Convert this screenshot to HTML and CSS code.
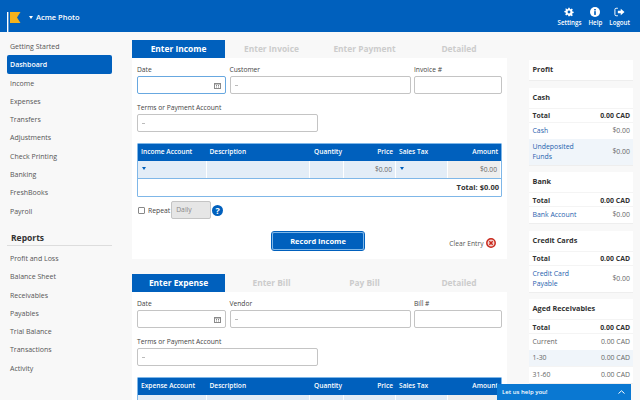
FILE: index.html
```html
<!DOCTYPE html>
<html lang="en">
<head>
	<meta charset="UTF-8">
	<title>Acme Photo</title>
	<link rel="stylesheet" href="styles.css">
</head>
<body>
	<header class="topbar">
		<div class="brand">
			<svg class="flag" width="14" height="20" viewBox="0 0 14 20"><rect x="0" y="0" width="1.4" height="20" fill="#fff"/><path d="M3 0H13.5L10 5.500L13.500 11H3Z" fill="#f5b21a"/></svg>
			<span class="caret caret-white"></span>
			<span class="company">Acme Photo</span>
		</div>
		<nav class="topnav">
			<div class="topnav-item">
				<svg width="10" height="10" viewBox="-1 -1 14 14"><path fill="#fff" fill-rule="evenodd" d="M5 0h2l.3 1.700 1.100.5L9.900 1.200l1.400 1.400-1 1.500.5 1.100 1.700.3v2l-1.700.3-.5 1.100 1 1.500-1.400 1.400-1.500-1-1.100.5L7 12H5l-.3-1.700-1.100-.5-1.500 1L.7 9.400l1-1.500-.5-1.100L-.5 6.500v-2l1.700-.3.5-1.100-1-1.500L2.100 1.200l1.500 1 1.100-.5zM6 4a2 2 0 1 0 0 4 2 2 0 0 0 0-4z"/></svg>
				<span>Settings</span>
			</div>
			<div class="topnav-item">
				<svg width="10" height="10" viewBox="0 0 12 12"><circle cx="6" cy="6" r="6" fill="#fff"/><rect x="5" y="5" width="2" height="4.500" fill="#0060bd"/><rect x="5" y="2.400" width="2" height="1.700" fill="#0060bd"/></svg>
				<span>Help</span>
			</div>
			<div class="topnav-item">
				<svg width="11" height="10" viewBox="0 0 13 12"><path fill="none" stroke="#fff" stroke-width="1.200" d="M4.500 1.500H2.500a1.500 1.500 0 0 0-1.500 1.500v6a1.500 1.500 0 0 0 1.500 1.500h2"/><path fill="#fff" d="M4.500 4.500H8V2l4.500 4L8 10V7.500H4.500z"/></svg>
				<span>Logout</span>
			</div>
		</nav>
	</header>

	<div class="layout">
		<aside class="sidebar">
			<a class="side-link">Getting Started</a>
			<a class="side-link active">Dashboard</a>
			<a class="side-link">Income</a>
			<a class="side-link">Expenses</a>
			<a class="side-link">Transfers</a>
			<a class="side-link">Adjustments</a>
			<a class="side-link">Check Printing</a>
			<a class="side-link">Banking</a>
			<a class="side-link">FreshBooks</a>
			<a class="side-link">Payroll</a>
			<div class="side-heading">Reports</div>
			<a class="side-link">Profit and Loss</a>
			<a class="side-link">Balance Sheet</a>
			<a class="side-link">Receivables</a>
			<a class="side-link">Payables</a>
			<a class="side-link">Trial Balance</a>
			<a class="side-link">Transactions</a>
			<a class="side-link">Activity</a>
		</aside>

		<main class="center">
			<section class="entry">
				<div class="tabs">
					<div class="tab current">Enter Income</div>
					<div class="tab">Enter Invoice</div>
					<div class="tab">Enter Payment</div>
					<div class="tab">Detailed</div>
				</div>
				<div class="panel">
					<div class="fields">
						<label class="field">Date
							<span class="input focused"><svg class="cal" width="7" height="7" viewBox="0 0 7 7"><path fill="#8a8a8a" d="M0 1h7v6H0zM1 2.500v3.500h5V2.500z"/><path fill="#8a8a8a" d="M2 3h1v1H2zM4 3h1v1H4zM2 4.600h1v1H2zM4 4.600h1v1H4z"/></svg></span>
						</label>
						<label class="field">Customer
							<span class="input"><i class="dash"></i></span>
						</label>
						<label class="field">Invoice #
							<span class="input"></span>
						</label>
					</div>
					<label class="field field-terms">Terms or Payment Account
						<span class="input"><i class="dash"></i></span>
					</label>
					<div class="lines">
						<div class="lines-head">
							<span>Income Account</span><span>Description</span><span class="qty">Quantity</span><span class="num">Price</span><span>Sales Tax</span><span class="num">Amount</span>
						</div>
						<div class="lines-row">
							<span><i class="caret"></i></span><span></span><span></span><span class="num">$0.00</span><span><i class="caret"></i></span><span class="num readonly">$0.00</span>
						</div>
						<div class="lines-total">Total: $0.00</div>
					</div>
					<div class="repeat">
						<span class="check"></span>
						<span>Repeat</span>
						<span class="daily">Daily</span>
						<span class="help-dot">?</span>
					</div>
					<div class="actions">
						<button class="record">Record Income</button>
						<span class="clear">Clear Entry
							<svg width="10" height="10" viewBox="0 0 10 10"><circle cx="5" cy="5" r="4.200" fill="#f4d6d2" stroke="#c9281c" stroke-width="1.500"/><path d="M3.300 3.300l3.400 3.400M6.700 3.300l-3.400 3.400" stroke="#c9281c" stroke-width="1.400"/></svg>
						</span>
					</div>
				</div>
			</section>

			<section class="entry">
				<div class="tabs">
					<div class="tab current">Enter Expense</div>
					<div class="tab">Enter Bill</div>
					<div class="tab">Pay Bill</div>
					<div class="tab">Detailed</div>
				</div>
				<div class="panel">
					<div class="fields">
						<label class="field">Date
							<span class="input"><svg class="cal" width="7" height="7" viewBox="0 0 7 7"><path fill="#8a8a8a" d="M0 1h7v6H0zM1 2.500v3.500h5V2.500z"/><path fill="#8a8a8a" d="M2 3h1v1H2zM4 3h1v1H4zM2 4.600h1v1H2zM4 4.600h1v1H4z"/></svg></span>
						</label>
						<label class="field">Vendor
							<span class="input"><i class="dash"></i></span>
						</label>
						<label class="field">Bill #
							<span class="input"></span>
						</label>
					</div>
					<label class="field field-terms">Terms or Payment Account
						<span class="input"><i class="dash"></i></span>
					</label>
					<div class="lines">
						<div class="lines-head">
							<span>Expense Account</span><span>Description</span><span class="qty">Quantity</span><span class="num">Price</span><span>Sales Tax</span><span class="num">Amount</span>
						</div>
						<div class="lines-row">
							<span></span><span></span><span></span><span></span><span></span><span class="readonly"></span>
						</div>
					</div>
				</div>
			</section>
		</main>

		<aside class="summary">
			<div class="card"><h3>Profit</h3></div>
			<div class="card">
				<h3>Cash</h3>
				<div class="row total"><span>Total</span><span>0.00 CAD</span></div>
				<div class="row"><a>Cash</a><span>$0.00</span></div>
				<div class="row tinted"><a>Undeposited Funds</a><span>$0.00</span></div>
			</div>
			<div class="card">
				<h3>Bank</h3>
				<div class="row total"><span>Total</span><span>0.00 CAD</span></div>
				<div class="row"><a>Bank Account</a><span>$0.00</span></div>
			</div>
			<div class="card">
				<h3>Credit Cards</h3>
				<div class="row total"><span>Total</span><span>0.00 CAD</span></div>
				<div class="row"><a>Credit Card Payable</a><span>$0.00</span></div>
			</div>
			<div class="card">
				<h3>Aged Receivables</h3>
				<div class="row total"><span>Total</span><span>0.00 CAD</span></div>
				<div class="row"><span>Current</span><span>0.00 CAD</span></div>
				<div class="row tinted"><span>1-30</span><span>0.00 CAD</span></div>
				<div class="row"><span>31-60</span><span>0.00 CAD</span></div>
			</div>
		</aside>
	</div>

	<div class="chat">
		<span>Let us help you!</span>
		<svg width="7" height="4" viewBox="0 0 7 4"><path d="M.5 3.500L3.500 .8l3 2.700" fill="none" stroke="#fff" stroke-width="1"/></svg>
	</div>
</body>
</html>
```
FILE: styles.css
```css
* {
  box-sizing: border-box;
}
html, body {
  height: 400px;
  overflow: hidden;
}
body {
  margin: 0;
  background-color: #f8f8f8;
  color: #444;
  font-family: "Open Sans", sans-serif;
  font-size: 7px;
}

/* top bar */
.topbar {
  display: flex;
  justify-content: space-between;
  height: 32px;
  padding: 0 10px 0 7px;
  background-color: #0060bd;
  color: #fff;
}
.brand {
  display: flex;
  align-items: flex-start;
  padding-top: 12px;
}
.flag {
  margin-right: 8px;
}
.company {
  margin-left: 3px;
  font-size: 7.500px;
  font-weight: 600;
  line-height: 10px;
}
.caret {
  display: inline-block;
  width: 0;
  height: 0;
  border-left: 2.500px solid transparent;
  border-right: 2.500px solid transparent;
  border-top: 3px solid #0060bd;
}
.caret-white {
  margin-top: 4px;
  border-top-color: #fff;
}
.topnav {
  display: flex;
  gap: 7px;
  padding-top: 7px;
}
.topnav-item {
  display: flex;
  flex-direction: column;
  align-items: center;
  font-size: 6.200px;
  font-weight: 600;
  line-height: 11px;
}

.layout {
  display: flex;
  align-items: flex-start;
  height: 368px;
  overflow: hidden;
}

/* left menu */
.sidebar {
  flex: none;
  width: 132px;
  padding: 5px 20px 0 7px;
}
.side-link {
  display: block;
  height: 18.300px;
  padding-left: 3px;
  line-height: 19.500px;
  color: #555;
}
.side-link.active {
  border-radius: 2px;
  background-color: #0060bd;
  color: #fff;
  font-weight: 600;
}
.side-heading {
  height: 16px;
  margin: 10px 0 3px;
  padding-left: 4px;
  border-bottom: 1px solid #ddd;
  color: #333;
  font-size: 8.500px;
  font-weight: 700;
  line-height: 15px;
}

/* entry forms */
.center {
  flex: none;
  width: 375px;
  padding-top: 8px;
}
.entry {
  margin-bottom: 15px;
}
.tabs {
  display: grid;
  grid-template-columns: 93px 93px 93px 96px;
  height: 18px;
}
.tab {
  color: #ccc;
  font-size: 8.400px;
  font-weight: 700;
  line-height: 18px;
  text-align: center;
}
.tab.current {
  background-color: #0060bd;
  color: #fff;
}
.panel {
  height: 201px;
  padding: 7px 5px 0;
  background-color: #fff;
}
.fields {
  display: grid;
  grid-template-columns: 89px 181px 88px;
  column-gap: 3.500px;
}
.field {
  display: block;
  color: #444;
  font-size: 6.700px;
  line-height: 10px;
}
.field-terms {
  width: 181px;
  margin-top: 9px;
}
.input {
  display: flex;
  align-items: center;
  justify-content: flex-end;
  height: 18px;
  margin-top: 1px;
  padding: 0 4px;
  border: 1px solid #c4c4c4;
  border-radius: 2px;
  background-color: #fff;
}
.input.focused {
  border-color: #68a8e0;
}
.dash {
  width: 3px;
  height: 1px;
  margin-right: auto;
  background-color: #bbb;
}

/* line items */
.lines {
  margin-top: 11px;
  border: 1px solid #7fb7e8;
  border-radius: 1px;
}
.lines-head, .lines-row {
  display: grid;
  grid-template-columns: 68.500px 103.500px 34px 52px 52px 1fr;
}
.lines-head {
  height: 17px;
  background-color: #0060bd;
  color: #fff;
  font-size: 6.600px;
  font-weight: 600;
  line-height: 16px;
}
.lines-head span {
  padding: 0 3px;
}
.lines-head .qty {
  padding-left: 4px;
}
.num {
  text-align: right;
}
.lines-row {
  height: 18px;
  border-bottom: 1px solid #7fb7e8;
  color: #666;
  font-size: 6.700px;
  line-height: 17px;
}
.lines-row span {
  padding: 0 3px;
  border-right: 1px solid #fff;
  background-color: #e3edf7;
}
.lines-row .caret {
  margin-left: 1px;
  vertical-align: 2px;
}
.lines-row .readonly {
  background-color: #eee;
}
.lines-total {
  height: 17px;
  padding-right: 2px;
  color: #333;
  font-size: 7.500px;
  font-weight: 700;
  line-height: 17px;
  text-align: right;
}
.repeat {
  display: flex;
  align-items: center;
  height: 18px;
  margin-top: 4px;
  padding-left: 1px;
  font-size: 6.800px;
}
.check {
  width: 7px;
  height: 7px;
  margin-right: 3px;
  border: 1px solid #888;
  border-radius: 1px;
}
.daily {
  width: 40px;
  height: 18px;
  margin-left: 1px;
  padding-left: 4px;
  border: 1px solid #c4c4c4;
  border-radius: 2px;
  background-color: #e6e6e6;
  color: #888;
  line-height: 16px;
}
.help-dot {
  width: 11px;
  height: 11px;
  margin-left: 1px;
  border-radius: 50%;
  background-color: #0060bd;
  color: #fff;
  font-size: 9px;
  font-weight: 700;
  line-height: 11px;
  text-align: center;
}
.actions {
  display: flex;
  justify-content: space-between;
  align-items: flex-end;
  height: 18px;
  margin-top: 13px;
  padding: 0 6.500px 0 135px;
}
.record {
  width: 92px;
  height: 18px;
  padding: 0;
  border: 1px solid #7fb7e8;
  outline: 1px solid #0060bd;
  border-radius: 2px;
  background-color: #0060bd;
  color: #fff;
  font-family: inherit;
  font-size: 7.500px;
  font-weight: 700;
}
.clear {
  display: flex;
  align-items: center;
  gap: 2px;
  margin-bottom: 2px;
  color: #555;
  font-size: 6.700px;
}

/* right column */
.summary {
  flex: none;
  width: 104px;
  margin-left: 22px;
  padding-top: 28px;
}
.card {
  margin-bottom: 7.500px;
  background-color: #fff;
  box-shadow: 0 1px 0 #eee;
}
.card h3 {
  height: 20px;
  margin: 0;
  padding-left: 3.500px;
  color: #333;
  font-size: 7.300px;
  font-weight: 700;
  line-height: 19px;
}
.row {
  display: flex;
  align-items: center;
  justify-content: space-between;
  min-height: 16px;
  padding: 3px 3px 3px 3.500px;
  border-top: 1px solid #f4f4f4;
  color: #666;
  font-size: 6.900px;
  line-height: 10px;
}
.row a {
  width: 55px;
  color: #1f62ae;
}
.row.total {
  min-height: 14px;
  padding-top: 2px;
  padding-bottom: 0;
  color: #333;
  font-weight: 700;
}
.row.tinted {
  border-top: none;
  background-color: #f0f5fa;
}

/* help widget */
.chat {
  position: fixed;
  left: 497px;
  bottom: 0;
  display: flex;
  align-items: center;
  justify-content: space-between;
  width: 134px;
  height: 16.500px;
  padding: 0 6px 0 5px;
  background-color: #0a78d2;
  color: #fff;
  font-size: 6px;
  font-weight: 600;
}
```
